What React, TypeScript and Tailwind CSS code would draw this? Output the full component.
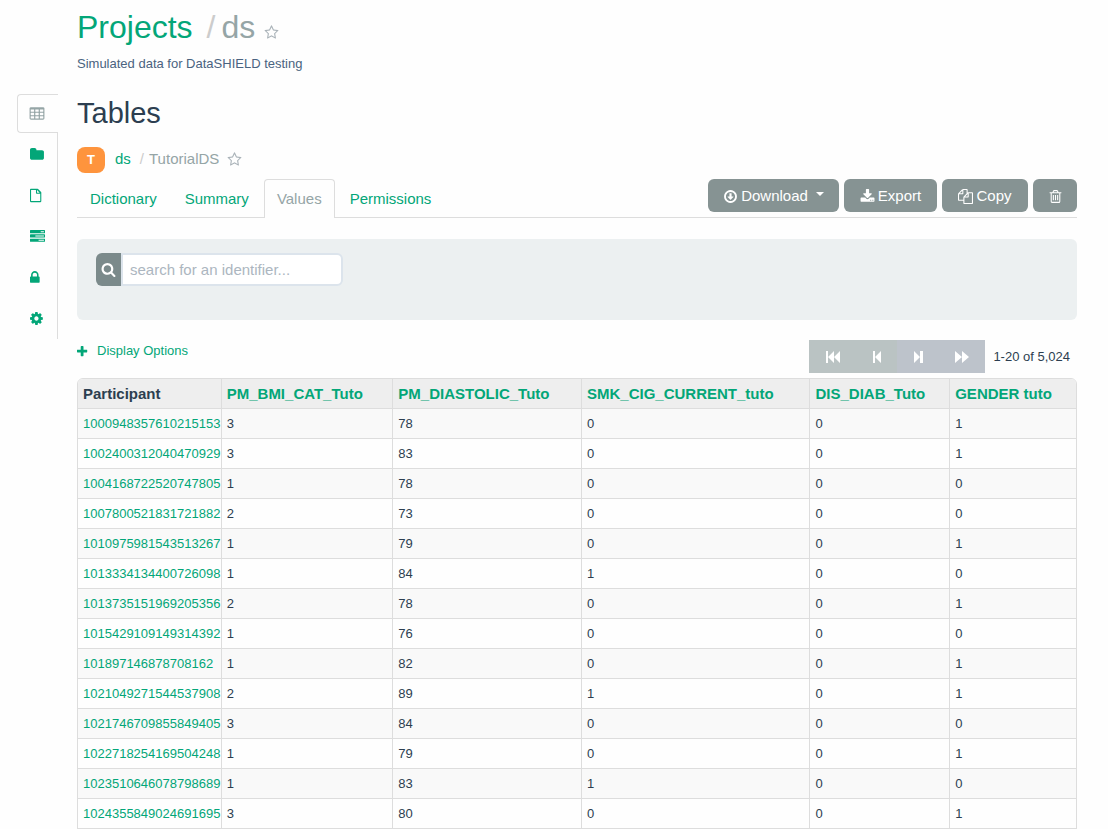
import React from "react";

const ICONS = {
  star: "M1201 1004l306-297-422-62-189-382-189 382-422 62 306 297-73 421 378-199 377 199zm527-357q0 22-26 48l-363 354 86 500q1 7 1 20 0 50-41 50-19 0-40-12l-449-236-449 236q-22 12-40 12-21 0-31.5-14.5t-10.5-35.5q0-6 2-20l86-500-364-354q-25-27-25-48 0-37 56-46l502-73 225-455q19-41 49-41t49 41l225 455 502 73q56 9 56 46z",
  table:
    "M576 1376v-192q0-14-9-23t-23-9h-320q-14 0-23 9t-9 23v192q0 14 9 23t23 9h320q14 0 23-9t9-23zm0-384v-192q0-14-9-23t-23-9h-320q-14 0-23 9t-9 23v192q0 14 9 23t23 9h320q14 0 23-9t9-23zm512 384v-192q0-14-9-23t-23-9h-320q-14 0-23 9t-9 23v192q0 14 9 23t23 9h320q14 0 23-9t9-23zm-512-768v-192q0-14-9-23t-23-9h-320q-14 0-23 9t-9 23v192q0 14 9 23t23 9h320q14 0 23-9t9-23zm512 384v-192q0-14-9-23t-23-9h-320q-14 0-23 9t-9 23v192q0 14 9 23t23 9h320q14 0 23-9t9-23zm512 384v-192q0-14-9-23t-23-9h-320q-14 0-23 9t-9 23v192q0 14 9 23t23 9h320q14 0 23-9t9-23zm-512-768v-192q0-14-9-23t-23-9h-320q-14 0-23 9t-9 23v192q0 14 9 23t23 9h320q14 0 23-9t9-23zm512 384v-192q0-14-9-23t-23-9h-320q-14 0-23 9t-9 23v192q0 14 9 23t23 9h320q14 0 23-9t9-23zm0-384v-192q0-14-9-23t-23-9h-320q-14 0-23 9t-9 23v192q0 14 9 23t23 9h320q14 0 23-9t9-23zm128-320v1088q0 66-47 113t-113 47h-1344q-66 0-113-47t-47-113v-1088q0-66 47-113t113-47h1344q66 0 113 47t47 113z",
  folder:
    "M1664 608v704q0 92-66 158t-158 66h-1216q-92 0-158-66t-66-158v-960q0-92 66-158t158-66h320q92 0 158 66t66 158v32h672q92 0 158 66t66 158z",
  file: "M96 100h800q40 0 70 28l356 356q28 30 28 70v1040q0 96-96 96h-1158q-96 0-96-96v-1398q0-96 96-96zM128 228v1334h1094v-880h-412q-96 0-96-96v-358zM842 246v308h308z",
  tasks:
    "M1024 1408h640v-128h-640v128zm-384-512h1024v-128h-1024v128zm640-512h384v-128h-384v128zm512 832v256q0 26-19 45t-45 19h-1664q-26 0-45-19t-19-45v-256q0-26 19-45t45-19h1664q26 0 45 19t19 45zm0-512v256q0 26-19 45t-45 19h-1664q-26 0-45-19t-19-45v-256q0-26 19-45t45-19h1664q26 0 45 19t19 45zm0-512v256q0 26-19 45t-45 19h-1664q-26 0-45-19t-19-45v-256q0-26 19-45t45-19h1664q26 0 45 19t19 45z",
  lock: "M320 768h512v-192q0-106-75-181t-181-75-181 75-75 181v192zm832 96v576q0 40-28 68t-68 28h-960q-40 0-68-28t-28-68v-576q0-40 28-68t68-28h32v-192q0-184 132-316t316-132 316 132 132 316v192h32q40 0 68 28t28 68z",
  cog: "M1024 896q0-106-75-181t-181-75-181 75-75 181 75 181 181 75 181-75 75-181zm512-109v222q0 12-8 23t-20 13l-185 28q-19 54-39 91 35 50 107 138 10 12 10 25t-9 23q-27 37-99 108t-94 71q-12 0-26-9l-138-108q-44 23-91 38-16 136-29 186-7 28-36 28h-222q-14 0-24.5-8.5t-11.5-21.5l-28-184q-49-16-90-37l-141 107q-10 9-25 9-14 0-25-11-126-114-165-168-7-10-7-23 0-12 8-23 15-21 51-66.5t54-70.5q-27-50-41-99l-183-27q-13-2-21-12.5t-8-23.5v-222q0-12 8-23t19-13l186-28q14-46 39-92-40-57-107-138-10-12-10-24 0-10 9-23 26-36 98.5-107.5t94.5-71.5q13 0 26 10l138 107q44-23 91-38 16-136 29-186 7-28 36-28h222q14 0 24.5 8.5t11.5 21.5l28 184q49 16 90 37l142-107q9-9 24-9 13 0 25 10 129 119 165 170 7 8 7 22 0 12-8 23-15 21-51 66.5t-54 70.5q26 50 41 98l183 28q13 2 21 12.5t8 23.5z",
  search:
    "M1216 832q0-185-131.5-316.5t-316.5-131.5-316.5 131.5-131.5 316.5 131.5 316.5 316.5 131.5 316.5-131.5 131.5-316.5zm512 832q0 52-38 90t-90 38q-54 0-90-38l-343-342q-179 124-399 124-143 0-273.5-55.5t-225-150-150-225-55.5-273.5 55.5-273.5 150-225 225-150 273.5-55.5 273.5 55.5 225 150 150 225 55.5 273.5q0 220-124 399l343 343q37 37 37 90z",
  plus: "M1408 736v192q0 40-28 68t-68 28h-416v416q0 40-28 68t-68 28h-192q-40 0-68-28t-28-68v-416h-416q-40 0-68-28t-28-68v-192q0-40 28-68t68-28h416v-416q0-40 28-68t68-28h192q40 0 68 28t28 68v416h416q40 0 68 28t28 68z",
  download:
    "M1344 1344q0-26-19-45t-45-19-45 19-19 45 19 45 45 19 45-19 19-45zm256 0q0-26-19-45t-45-19-45 19-19 45 19 45 45 19 45-19 19-45zm128-224v320q0 40-28 68t-68 28h-1472q-40 0-68-28t-28-68v-320q0-40 28-68t68-28h465l135 136q58 56 136 56t136-56l136-136h464q40 0 68 28t28 68zm-325-569q17 41-14 70l-448 448q-18 19-45 19t-45-19l-448-448q-31-29-14-70 17-39 59-39h256v-448q0-26 19-45t45-19h256q26 0 45 19t19 45v448h256q42 0 59 39z",
  circleDown:
    "M1248 928q0 14-10 24l-319 319q-10 9-23 9t-23-9l-320-320q-15-16-7-35 8-20 30-20h192v-352q0-14 9-23t23-9h192q14 0 23 9t9 23v352h192q14 0 23 9t9 23zm-352-576q-148 0-273 73t-198 198-73 273 73 273 198 198 273 73 273-73 198-198 73-273-73-273-198-198-273-73zm768 544q0 209-103 385.5t-279.5 279.5-385.5 103-385.5-103-279.5-279.5-103-385.5 103-385.5 279.5-279.5 385.5-103 385.5 103 279.5 279.5 103 385.5z",
  copy: "M1696 384q40 0 68 28t28 68v1216q0 40-28 68t-68 28h-960q-40 0-68-28t-28-68v-288h-544q-40 0-68-28t-28-68v-672q0-40 20-88t48-76l408-408q28-28 76-48t88-20h416q40 0 68 28t28 68v328q68-40 128-40h416zm-544 213l-299 299h299v-299zm-640-384l-299 299h299v-299zm196 647l316-316v-416h-384v416q0 40-28 68t-68 28h-416v640h512v-256q0-40 20-88t48-76zm956 804v-1152h-384v416q0 40-28 68t-68 28h-416v640h896z",
  trash:
    "M704 736v576q0 14-9 23t-23 9h-64q-14 0-23-9t-9-23v-576q0-14 9-23t23-9h64q14 0 23 9t9 23zm256 0v576q0 14-9 23t-23 9h-64q-14 0-23-9t-9-23v-576q0-14 9-23t23-9h64q14 0 23 9t9 23zm256 0v576q0 14-9 23t-23 9h-64q-14 0-23-9t-9-23v-576q0-14 9-23t23-9h64q14 0 23 9t9 23zm128 724v-948h-896v948q0 22 7 40.5t14.5 27 10.5 8.5h832q3 0 10.5-8.5t14.5-27 7-40.5zm-672-1076h448l-48-117q-7-9-17-11h-317q-10 2-17 11zm928 32v64q0 14-9 23t-23 9h-96v948q0 83-47 143.5t-113 60.5h-832q-66 0-113-58.5t-47-141.5v-952h-96q-14 0-23-9t-9-23v-64q0-14 9-23t23-9h309l70-167q15-37 54-63t79-26h320q40 0 79 26t54 63l70 167h309q14 0 23 9t9 23z",
};

function Icon({ name, className = "size-[15px]" }: { name: keyof typeof ICONS; className?: string }) {
  return (
    <svg viewBox="0 0 1792 1792" fill="currentColor" aria-hidden="true" className={`shrink-0 ${className}`}>
      <path d={ICONS[name]} />
    </svg>
  );
}

const SECTIONS: { name: keyof typeof ICONS; label: string }[] = [
  { name: "folder", label: "Files" },
  { name: "file", label: "Reports" },
  { name: "tasks", label: "Tasks" },
  { name: "lock", label: "Permissions" },
  { name: "cog", label: "Administration" },
];

function Sidebar() {
  return (
    <nav aria-label="Project sections" className="flex w-[41px] shrink-0 flex-col pt-[94px]">
      <a
        href="#tables"
        aria-label="Tables"
        aria-current="page"
        className="flex h-[39px] items-center rounded-l border border-r-0 border-[#dddddd] pl-[11px] text-[#95a5a6]"
      >
        <Icon name="table" className="size-4" />
      </a>
      <div className="flex flex-col border-r border-[#dddddd] pt-px">
        {SECTIONS.map((s) => (
          <a key={s.name} href={`#${s.name}`} aria-label={s.label} className="flex h-[41px] items-center pl-[13px] text-[#03a678]">
            <Icon name={s.name} />
          </a>
        ))}
      </div>
    </nav>
  );
}

function StarButton({ label }: { label: string }) {
  return (
    <button type="button" aria-label={label} className="text-[#a9b2b8]">
      <Icon name="star" />
    </button>
  );
}

function ActionButton({
  icon,
  label,
  width,
  children,
}: {
  icon: keyof typeof ICONS;
  label: string;
  width: string;
  children?: React.ReactNode;
}) {
  return (
    <button
      type="button"
      aria-label={label}
      className={`flex h-[33px] items-center justify-center gap-[3px] rounded-md bg-[#869393] pt-px text-[15px] leading-5 text-white ${width}`}
    >
      <Icon name={icon} />
      {children}
    </button>
  );
}

const PAGER = [
  { label: "First page", d: "M4 1h2v12h-2zM6 7l6-6v12zM12 7l6-6v12z", tone: "bg-[#bac3c3]" },
  { label: "Previous page", d: "M7 1h2v12h-2zM9 7l6-6v12z", tone: "bg-[#bac3c3]" },
  { label: "Next page", d: "M4 1l6 6l-6 6zM10 1h3v12h-3z", tone: "bg-[#bdc3cb]" },
  { label: "Forward", d: "M1 1l7 6l-7 6zM8 1l7 6l-7 6z", tone: "bg-[#bdc3cb]" },
];

const COLUMNS = ["PM_BMI_CAT_Tuto", "PM_DIASTOLIC_Tuto", "SMK_CIG_CURRENT_tuto", "DIS_DIAB_Tuto", "GENDER tuto"];

const ROWS: [string, number, number, number, number, number][] = [
  ["1000948357610215153", 3, 78, 0, 0, 1],
  ["1002400312040470929", 3, 83, 0, 0, 1],
  ["1004168722520747805", 1, 78, 0, 0, 0],
  ["1007800521831721882", 2, 73, 0, 0, 0],
  ["1010975981543513267", 1, 79, 0, 0, 1],
  ["1013334134400726098", 1, 84, 1, 0, 0],
  ["1013735151969205356", 2, 78, 0, 0, 1],
  ["1015429109149314392", 1, 76, 0, 0, 0],
  ["101897146878708162", 1, 82, 0, 0, 1],
  ["1021049271544537908", 2, 89, 1, 0, 1],
  ["1021746709855849405", 3, 84, 0, 0, 0],
  ["1022718254169504248", 1, 79, 0, 0, 1],
  ["1023510646078798689", 1, 83, 1, 0, 0],
  ["1024355849024691695", 3, 80, 0, 0, 1],
];

function ValuesTable() {
  return (
    <div className="mt-[5px] overflow-hidden rounded-t-md border border-[#dddddd]">
      <table className="w-full table-fixed border-separate border-spacing-0 text-left text-[13px] leading-5">
        <colgroup>
          <col className="w-[14.3%]" />
          <col className="w-[17.2%]" />
          <col className="w-[18.9%]" />
          <col className="w-[22.9%]" />
          <col className="w-[14%]" />
          <col />
        </colgroup>
        <thead>
          <tr className="h-[30px] bg-[#eeeeee] text-[15px]">
            <th scope="col" className="border-b border-[#dddddd] px-[5px] font-bold">
              Participant
            </th>
            {COLUMNS.map((c) => (
              <th key={c} scope="col" className="border-b border-l border-[#dddddd] px-[5px] font-bold whitespace-nowrap">
                <a href="#variable" className="text-[#03a678]">
                  {c}
                </a>
              </th>
            ))}
          </tr>
        </thead>
        <tbody>
          {ROWS.map(([id, ...values]) => (
            <tr key={id} className="h-[30px] odd:bg-[#f9f9f9]">
              <td className="border-b border-[#dddddd] pl-[5px]">
                <a href="#participant" className="text-[#03a678]">
                  {id}
                </a>
              </td>
              {values.map((v, i) => (
                <td key={i} className="border-b border-l border-[#dddddd] px-[5px]">
                  {v}
                </td>
              ))}
            </tr>
          ))}
        </tbody>
      </table>
    </div>
  );
}

export default function App() {
  return (
    <div className="flex bg-[#fefefe] pr-[31px] pl-[17px] font-['Liberation_Sans',Arial,sans-serif] text-[#2c3e50]">
      <Sidebar />
      <main className="ml-[19px] min-w-0 grow">
        <h1 className="flex h-[54px] items-center text-[32px]">
          <a href="#projects" className="text-[#03a678]">
            Projects
          </a>
          <span className="ml-[14px] text-[#cccccc]">/</span>
          <span className="mr-[9px] ml-[6px] text-[#95a5a6]">ds</span>
          <span className="flex pt-[10px]">
            <StarButton label="Bookmark project" />
          </span>
        </h1>
        <p className="text-[13px] leading-5 text-[#4a6380]">Simulated data for DataSHIELD testing</p>
        <h2 className="mt-5 flex h-10 items-center text-[29px]">Tables</h2>

        <nav aria-label="Breadcrumb" className="mt-[13px] flex h-[26px] items-center text-[15px] leading-5">
          <span className="flex h-[26px] w-7 items-center justify-center rounded-lg bg-[#fe943d] text-[13px] font-bold text-white">T</span>
          <div className="flex items-center pb-[2px]">
            <a href="#ds" className="ml-[10px] text-[#03a678]">
              ds
            </a>
            <span className="ml-[9px] text-[#cccccc]">/</span>
            <span className="mr-2 ml-[5px] text-[#95a5a6]">TutorialDS</span>
            <StarButton label="Bookmark table" />
          </div>
        </nav>

        <div className="mt-[6px] flex items-start justify-between border-b border-[#dddddd]">
          <nav aria-label="Table views" className="-mb-px flex gap-[2px] text-[15px]">
            <a href="#dictionary" className="flex h-[39px] items-center border border-b-0 border-transparent px-3 text-[#03a678]">
              Dictionary
            </a>
            <a href="#summary" className="flex h-[39px] items-center border border-b-0 border-transparent px-3 text-[#03a678]">
              Summary
            </a>
            <a
              href="#values"
              aria-current="page"
              className="flex h-[39px] items-center rounded-t border border-b-0 border-[#dddddd] bg-[#fefefe] px-3 text-[#95a5a6]"
            >
              Values
            </a>
            <a href="#permissions" className="flex h-[39px] items-center border border-b-0 border-transparent px-3 text-[#03a678]">
              Permissions
            </a>
          </nav>
          <div className="flex gap-[5px]">
            <ActionButton icon="circleDown" label="Download" width="w-[131px]">
              Download
              <svg viewBox="0 0 8 4" fill="currentColor" aria-hidden="true" className="mb-1 ml-[5px] h-1 w-2">
                <path d="M0 0h8l-4 4z" />
              </svg>
            </ActionButton>
            <ActionButton icon="download" label="Export" width="w-[93px]">
              Export
            </ActionButton>
            <ActionButton icon="copy" label="Copy" width="w-[86px]">
              Copy
            </ActionButton>
            <ActionButton icon="trash" label="Remove" width="w-11" />
          </div>
        </div>

        <form className="mt-[21px] h-[81px] rounded-md bg-[#ecf0f1] px-[19px] pt-[14px]">
          <div className="flex h-[33px]">
            <label htmlFor="identifier" aria-label="Search" className="flex w-[25px] items-center justify-center rounded-l-md bg-[#7b8a8b] text-white">
              <Icon name="search" />
            </label>
            <input
              id="identifier"
              type="text"
              placeholder="search for an identifier..."
              className="w-[222px] rounded-r-md border-2 border-[#dce4ec] bg-white px-[7px] pt-px text-[15px] placeholder:text-[#acb6c0]"
            />
          </div>
        </form>

        <div className="mt-5 flex items-start justify-between text-[13px]">
          <button type="button" className="flex h-[22px] items-center gap-[7px] text-[#03a678]">
            <Icon name="plus" className="size-[13px]" />
            Display Options
          </button>
          <div className="flex h-[33px] items-center pr-[7px]">
            {PAGER.map((p) => (
              <button key={p.label} type="button" aria-label={p.label} className={`flex h-[33px] w-11 items-center justify-center text-white ${p.tone}`}>
                <svg viewBox="0 0 18 14" fill="currentColor" aria-hidden="true" className="h-[14px] w-[18px]">
                  <path d={p.d} />
                </svg>
              </button>
            ))}
            <span className="ml-2">1-20 of 5,024</span>
          </div>
        </div>

        <ValuesTable />
      </main>
    </div>
  );
}
